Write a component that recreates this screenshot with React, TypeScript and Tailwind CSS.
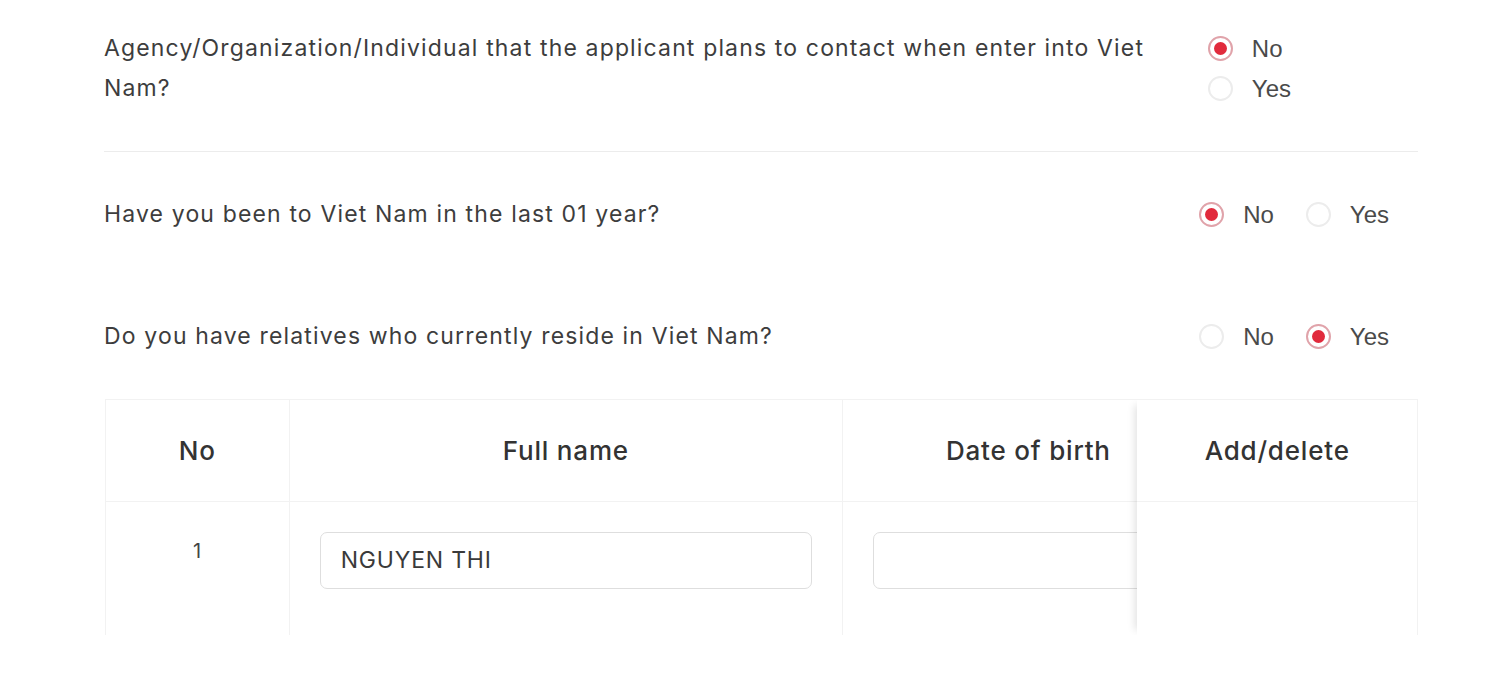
import React from 'react';

const qFont = { fontFamily: 'Inter, "Noto Sans", sans-serif' };

function Radio({ checked, label }: { checked: boolean; label: string }) {
    return (
        <label className="flex items-center gap-[19px] text-[24px] leading-[25px] text-[#4a4a4a] font-['Liberation_Sans',Arial,sans-serif]">
            <span
                className={`flex h-[25px] w-[25px] items-center justify-center rounded-full border-[2px] bg-white ${
                    checked ? 'border-[#e0a3aa]' : 'border-[#ececec]'
                }`}
            >
                {checked && <span className="h-[13px] w-[13px] rounded-full bg-[#e12a3c]" />}
            </span>
            {label}
        </label>
    );
}

function Question({ text, answer, stacked }: { text: string; answer: 'No' | 'Yes'; stacked?: boolean }) {
    return (
        <div className="flex items-start justify-between">
            <p className="w-[1090px] text-[23px] leading-[40px] tracking-[0.05em] text-[#3d3d3d]" style={qFont}>
                {text}
            </p>
            {stacked ? (
                <div className="mr-[127px] flex flex-col gap-[15px] pt-[8px]">
                    <Radio checked={answer === 'No'} label="No" />
                    <Radio checked={answer === 'Yes'} label="Yes" />
                </div>
            ) : (
                <div className="mr-[29px] flex items-center gap-[32px] pt-[8px]">
                    <Radio checked={answer === 'No'} label="No" />
                    <Radio checked={answer === 'Yes'} label="Yes" />
                </div>
            )}
        </div>
    );
}

export default function App() {
    return (
        <div className="h-[680px] w-[1500px] overflow-hidden bg-white">
            <div className="ml-[104px] w-[1314px] pt-[28px]">
                <Question
                    text="Agency/Organization/Individual that the applicant plans to contact when enter into Viet Nam?"
                    answer="No"
                    stacked
                />
                <div className="mt-[43px] border-t border-[#ececec]" />
                <div className="mt-[42px]">
                    <Question text="Have you been to Viet Nam in the last 01 year?" answer="No" />
                </div>
                <div className="mt-[82px]">
                    <Question text="Do you have relatives who currently reside in Viet Nam?" answer="Yes" />
                </div>

                {/* relatives table */}
                <div
                    className="ml-[1px] mt-[43px] flex h-[236px] w-[1313px] overflow-hidden border-x border-t border-[#f2f2f2] tracking-[0.05em]"
                    style={qFont}
                >
                    <div className="w-[184px] border-r border-[#f2f2f2]">
                        <div className="flex h-[102px] items-center justify-center border-b border-[#f2f2f2] text-[26px] font-medium text-[#333]">
                            No
                        </div>
                        <div className="pt-[36px] text-center text-[20px] leading-[26px] text-[#444]">1</div>
                    </div>
                    <div className="w-[554px] border-r border-[#f2f2f2]">
                        <div className="flex h-[102px] items-center justify-center border-b border-[#f2f2f2] text-[26px] font-medium text-[#333]">
                            Full name
                        </div>
                        <div className="px-[30px] pt-[30px]">
                            <div className="flex h-[57px] items-center rounded-[7px] border border-[#dedede] px-[20px] text-[23px] text-[#3a3a3a]">
                                NGUYEN THI
                            </div>
                        </div>
                    </div>
                    <div className="w-[295px] overflow-hidden">
                        <div className="w-[371px]">
                            <div className="flex h-[102px] items-center justify-center border-b border-[#f2f2f2] text-[26px] font-medium text-[#333]">
                                Date of birth
                            </div>
                            <div className="px-[30px] pt-[30px]">
                                <div className="h-[57px] rounded-[7px] border border-[#dedede]" />
                            </div>
                        </div>
                    </div>
                    <div className="relative z-10 w-[280px] bg-white shadow-[-7px_0_8px_-5px_rgba(0,0,0,0.12)]">
                        <div className="flex h-[102px] items-center justify-center border-b border-[#f2f2f2] text-[26px] font-medium text-[#333]">
                            Add/delete
                        </div>
                    </div>
                </div>
            </div>
        </div>
    );
}
